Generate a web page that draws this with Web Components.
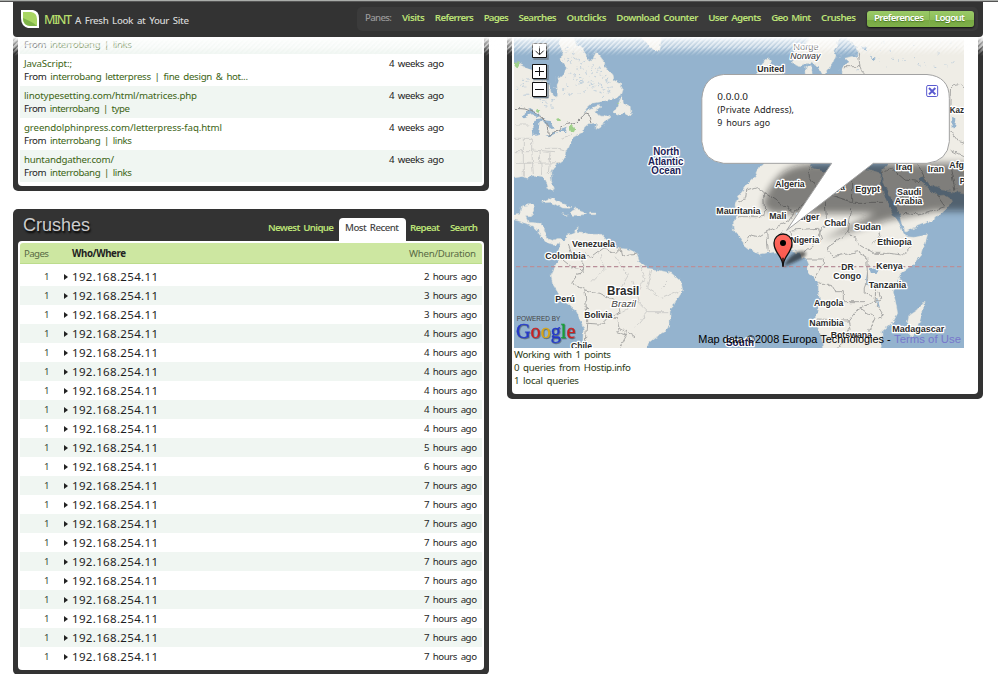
<!DOCTYPE html>
<html lang="en">
<head>
<meta charset="utf-8">
<title>Mint</title>
<style>
html,body{margin:0;height:674px;overflow:hidden;background:#fff}
body{font:9.7px/13px "Noto Sans","Open Sans",sans-serif;color:#262626;word-spacing:1.6px}
</style>
</head>
<body>
<mint-app></mint-app>
<script>
const mount = (el, html) => { el.attachShadow({mode:'open'}).innerHTML = html; };

/* Page shell: header bar on top, two columns of panes below */
customElements.define('mint-app', class extends HTMLElement {
  connectedCallback(){
    const refs = [
      ['','','interrobang | links',108,1],
      ['JavaScript:;',48,'interrobang letterpress | fine design &amp; hot...',224],
      ['linotypesetting.com/html/matrices.php',173,'interrobang | type',106],
      ['greendolphinpress.com/letterpress-faq.html',198,'interrobang | links',108],
      ['huntandgather.com/',90,'interrobang | links',108]];
    const hours = [2,3,3,4,4,4,4,4,4,5,6,7,7,7,7,7,7,7,7,7,7];
    mount(this, `<style>
      :host{display:block;width:998px;height:674px;overflow:hidden;position:relative}
      .top{height:1px;background:#aaadaa;border-bottom:1px solid #555}
      .cols{display:grid;grid-template-columns:476px 476px;gap:18px;padding-left:13px;align-items:start}
      .left{display:grid;gap:18px}
      .clip{height:145px;overflow:hidden;display:flex;flex-direction:column}
      .clip>:first-child{margin-top:-15px}
      .head{height:20px;display:flex;align-items:center;background:#cde7a1;border-bottom:1px solid #bcdc8c;border-radius:3px 3px 0 0;margin-bottom:3px;color:#5a6b45;padding:0 6px 0 4px}
      .head .who{margin-left:23px;color:#222;font-weight:bold}
      .head .when{margin-left:auto}
      .notes{height:42px;color:#2b3a12}
      .notes fit-text{display:block}
      .veil{position:absolute;left:13px;top:37px;width:970px;height:19px;
        background:linear-gradient(#fff,rgba(255,255,255,.6) 25%,rgba(255,255,255,.3) 60%,transparent),repeating-linear-gradient(135deg,rgba(255,255,255,.5) 0 1.2px,transparent 1.8px 3px,rgba(255,255,255,.5) 3.540px);
        -webkit-mask:linear-gradient(#000 55%,transparent);mask:linear-gradient(#000 55%,transparent)}
    </style>
    <div class="top"></div>
    <mint-header></mint-header>
    <div class="cols">
      <div class="left">
        <mint-pane cut><div class="clip">${refs.map((r,i)=>`<ref-row ${i%2?'':'alt'} title1="${r[0]}" w1="${r[1]}" from="${r[2]}" w2="${r[3]}"></ref-row>`).join('')}</div></mint-pane>
        <mint-pane>
          <fit-text slot="title" w="67">Crushes</fit-text>
          <mint-tab slot="tabs" w="66">Newest Unique</mint-tab><mint-tab slot="tabs" active w="54">Most Recent</mint-tab><mint-tab slot="tabs" w="30">Repeat</mint-tab><mint-tab slot="tabs" w="28">Search</mint-tab>
          <div class="head"><fit-text w="25">Pages</fit-text><fit-text class="who" w="54">Who/Where</fit-text><fit-text class="when" w="67">When/Duration</fit-text></div>
          ${hours.map((h,i)=>`<crush-row ${i%2?'alt':''} hours="${h}"></crush-row>`).join('')}
        </mint-pane>
      </div>
      <mint-pane cut>
        <geo-map></geo-map>
        <div class="notes"><fit-text w="97">Working with 1 points</fit-text><fit-text w="117">0 queries from Hostip.info</fit-text><fit-text w="65">1 local queries</fit-text></div>
      </mint-pane>
    </div>
    <div class="veil"></div>`);
  }
});

/* Dark top bar with logo, pane links and the two account buttons */
customElements.define('mint-header', class extends HTMLElement {
  connectedCallback(){
    const links = [['Visits',23],['Referrers',39],['Pages',25],['Searches',38],['Outclicks',40],['Download Counter',82],['User Agents',53],['Geo Mint',40],['Crushes',35]];
    mount(this, `<style>
      :host{display:flex;box-sizing:border-box;width:970px;height:35px;margin-left:13px;padding:5px 5px 4px 7px;background:#333;border-radius:0 0 4px 4px;align-items:flex-start}
      svg{margin-top:2px}
      .m{font-size:12.500px;font-weight:500;color:#b5dc6b;margin:6px 3px 0 4px}
      .t{color:#d6d6d6;font-weight:500;margin-top:7px}
      nav{margin-left:auto;box-sizing:border-box;width:621px;height:24px;border-radius:5px;background:#3b3b3b;display:flex;gap:9.900px;padding:4px 4px 0 8px;color:#bbe276;font-weight:600}
      .p{color:#999;font-weight:500}
      .btn{box-sizing:border-box;width:107px;height:16px;margin:0 0 0 1px;border-radius:3px;display:flex;color:#fff;background:linear-gradient(#9aca67 0,#8cbd58 55%,#78a943 56%,#7fb04a);box-shadow:0 1px 2px #111;padding:0 0 0 7px;text-shadow:0 1px 1px #4c7a25}
      .l{border-left:1px solid #7fae4d;margin-left:5px;padding-left:5px;height:15px}
    </style>
    <svg width="20" height="20" viewBox="0 0 20 20"><path d="M1 1H13Q19 2 19 9V19H8Q1 17 1 9Z" fill="#fff"/><path d="M3 3H11Q17 4 17 10V17H10Q3 16 3 10Z" fill="#a9d663"/><path d="M3 9Q8 11 10.500 12.500 14 14 17 17H10Q3 16 3 9Z" fill="#7fb448"/></svg>
    <fit-text class="m" w="28">MINT</fit-text><fit-text class="t" w="114">A Fresh Look at Your Site</fit-text>
    <nav><fit-text class="p" w="27">Panes:</fit-text>${links.map(l=>`<fit-text w="${l[1]}">${l[0]}</fit-text>`).join('')}
    <span class="btn"><fit-text w="50">Preferences</fit-text><span class="l"><fit-text w="30">Logout</fit-text></span></span></nav>`);
  }
});

/* Dark rounded frame round a white body; "cut" hides the title bar */
customElements.define('mint-pane', class extends HTMLElement {
  connectedCallback(){
    const cut = this.hasAttribute('cut');
    mount(this, `<style>
      :host{display:block;box-sizing:border-box;width:476px;background:#333;border-radius:${cut?'0 0':'5px 5px'} 5px 5px;padding:0 5px 5px}
      .bar{height:32px;display:${cut?'none':'flex'};padding:0 1px 0 5px;justify-content:space-between}
      .title{font:18px/20px "Liberation Sans",sans-serif;color:#ccc;text-shadow:1px 2px 2px #000;padding-top:6px}
      .tabs{display:flex;padding-top:9px}
      .body{background:#fff;border-radius:${cut?'0 0':'4px 4px'} 4px 4px;padding:${cut?0:2}px 2px 4px}
    </style><div class="bar"><div class="title"><slot name="title"></slot></div><div class="tabs"><slot name="tabs"></slot></div></div><div class="body"><slot></slot></div>`);
  }
});

customElements.define('mint-tab', class extends HTMLElement {
  connectedCallback(){
    mount(this, `<style>
      :host{display:block;box-sizing:border-box;height:23px;padding:3px 5px 0;color:#bbe276;font-weight:600}
      :host([active]){background:#fff;color:#444;font-weight:500;border-radius:4px 4px 0 0;padding:3px 7px 0 6px;margin-right:-1px}
    </style><fit-text w="${this.getAttribute('w')}">${this.textContent}</fit-text>`);
  }
});

customElements.define('ref-row', class extends HTMLElement {
  connectedCallback(){
    const a = n => this.getAttribute(n);
    mount(this, `<style>
      :host{display:flex;flex:none;box-sizing:border-box;height:32px;padding:3px 38px 0 4px;justify-content:space-between;color:#3c6414}
      :host([alt]){background:#f0f6f2}
      fit-text{display:block} b{color:#222;font-weight:400}
      .ago{color:#222}
    </style><div>${a('title1')?`<fit-text w="${a('w1')}">${a('title1')}</fit-text>`:'<div style="height:13px"></div>'}<fit-text w="${a('w2')}"><b>From</b> ${a('from').replace('&','&amp;')}</fit-text></div>
    ${a('title1')?'<fit-text class="ago" w="55">4 weeks ago</fit-text>':''}`);
  }
});

customElements.define('crush-row', class extends HTMLElement {
  connectedCallback(){
    mount(this, `<style>
      :host{display:flex;align-items:center;height:19px;padding:0 5px 0 24px}
      :host([alt]){background:#f0f6f2}
      .n{color:#3a4a3a} i{border-left:4px solid #222;border-top:3px solid transparent;border-bottom:3px solid transparent;margin:0 5px 0 15px}
      .ip{font-size:11.500px;color:#1e1e1e;margin-left:-1px} .h{margin-left:auto}
    </style><fit-text class="n" w="5">1</fit-text><i></i><fit-text class="ip" w="86">192.168.254.11</fit-text><fit-text class="h" w="53">${this.getAttribute('hours')} hours ago</fit-text>`);
  }
});

/* World map drawn in units of a third of a pixel */
customElements.define('geo-map', class extends HTMLElement {
  connectedCallback(){
    const labels = [
      ['Venezuela',201,330,636],['Colombia',121,242,672],['Perú',151,210,801],['Bolivia',238,322,849],['Chile',198,261,942],
      ['United',757,838,111],['Kaz',1334,1377,233],['Afg',1333,1377,399],['Iraq',1172,1222,406],['Iran',1268,1317,411],['P',1364,1380,446],
      ['Algeria',811,899,456],['Libya',955,1020,466],['Egypt',1051,1125,471],['Saudi',1176,1249,480],['Arabia',1169,1252,507],
      ['Mauritania',634,766,537],['Mali',793,844,552],['Niger',876,943,556],['Chad',958,1024,573],['Sudan',1047,1128,585],
      ['Nigeria',856,943,624],['Ethiopia',1117,1220,630],['DR',1009,1046,704],['Congo',985,1068,732],['Kenya',1114,1193,702],
      ['Tanzania',1091,1204,759],['Angola',927,1015,813],['Namibia',913,1016,873],['Botswana',977,1101,908],['Madagascar',1162,1318,891]];
    const t = (s,x1,x2,y,extra='') => `<text x="${x1}" y="${y}" textLength="${x2-x1}" lengthAdjust="spacingAndGlyphs" ${extra}>${s}</text>`;
    let specks = '', seed = 7;
    const rnd = () => (seed = (seed*16807)%2147483647)/2147483647;
    for(let i=0;i<150;i++){ const x=175+rnd()*150, y=35+rnd()*155; if(x-175 < (y+40)*.8) specks += `M${x|0} ${y|0}l${2+rnd()*5|0} ${rnd()*6-3|0}`; }
    for(let i=0;i<55;i++) specks += `M${30+rnd()*120|0} ${130+rnd()*90|0}l${2+rnd()*6|0} ${rnd()*6-3|0}`;
    for(let i=0;i<45;i++) specks += `M${990+rnd()*370|0} ${20+rnd()*90|0}l${2+rnd()*6|0} ${rnd()*6-3|0}`;
    mount(this, `<style>
      :host{display:block;width:450px;height:311px;word-spacing:0}
      svg{display:block}
      .lab{font:bold 28px "Liberation Sans",sans-serif;fill:#2b2b2b;stroke:#fff;stroke-width:8px;stroke-linejoin:round;paint-order:stroke}
      .u{font:29px "Noto Sans",sans-serif;fill:#222;word-spacing:5px}
      .sea{font-size:31px;fill:#1c2357}
    </style>
    <svg width="450" height="311" viewBox="27 6 1350 933">
      <defs>
        <filter id="rough" x="0" y="0" width="1" height="1"><feTurbulence type="fractalNoise" baseFrequency=".045" numOctaves="3" seed="4"/><feDisplacementMap in="SourceGraphic" scale="17" xChannelSelector="R" yChannelSelector="G"/></filter>
        <filter id="soft" x="-20%" y="-30%" width="140%" height="160%"><feGaussianBlur stdDeviation="11"/></filter>
        <filter id="soft2" x="-30%" y="-30%" width="160%" height="160%"><feGaussianBlur stdDeviation="4"/></filter>
        <linearGradient id="pin" x2="0" y2="1"><stop stop-color="#ff6a5f"/><stop offset="1" stop-color="#f8544a"/></linearGradient>
      </defs>
      <rect x="0" y="0" width="1400" height="950" fill="#94b3ce"/>
      <g filter="url(#rough)">
      <rect width="1400" height="950" fill="none"/>
      <g fill="#efede6" stroke="#d9dcd8" stroke-width="1.500">
        <path d="M10 72L45 88 60 95 80 105 100 115 125 130 133 150 138 172 148 186 158 182 156 150 162 130 178 115 184 95 168 72 172 50 165 30 170 0H207L215 25 235 40 240 62 260 78 274 50 290 70 300 95 320 115 325 135 345 145 355 162 350 178 330 190 290 200 262 205 245 220 232 240 252 225 280 212 287 218 272 228 285 242 300 246 320 240 318 252 290 270 270 283 272 264 250 266 235 280 232 295 205 310 195 325 185 350 182 370 160 385 145 400 137 412 140 440 148 460 143 472 130 460 122 435 115 425 95 422 70 430 50 425 10 432Z"/>
        <path d="M330 228L345 195 352 182 355 205 375 215 380 242 365 240 355 232 335 238ZM408 0L430 30 455 52 465 45 470 0Z"/>
        <path d="M110 500L130 491 160 500 185 510 200 520 170 519 140 502 115 503ZM195 531L210 522 235 528 245 538 225 541 205 541ZM257 534H272V539H257ZM172 536L190 539 180 542Z"/>
        <path d="M10 540L45 535 50 512 85 508 88 520 76 545 62 545 70 562 108 565 118 575 118 590 130 610 150 618 162 610 175 618 185 600 200 598 205 588 220 575 215 590 240 592 255 598 290 598 300 610 315 625 335 640 370 642 395 655 405 680 430 700 460 705 500 715 528 740 533 765 520 785 505 810 495 830 495 870 475 895 450 908 430 925 420 960H232L235 880 215 830 185 805 160 775 145 750 138 720 150 695 160 670 165 640 160 625 145 628 128 625 110 605 100 590 85 575 55 562 10 550Z"/>
        <path d="M765 395L750 425 735 440 715 465 700 485 690 510 695 540 685 565 690 590 705 610 720 630 745 650 770 660 800 652 830 650 860 645 880 652 890 668 905 672 912 690 905 705 925 730 940 750 940 775 945 800 935 830 930 850 940 880 950 910 955 960H1120L1132 920 1130 890 1165 860 1178 835 1172 800 1165 775 1172 745 1190 715 1225 690 1250 660 1268 598 1230 607 1205 605 1195 590 1180 560 1165 540 1150 510 1135 475 1125 445 1128 418 1110 412 1080 405 1060 414 1000 400 960 410 925 400 910 370H800Z"/>
        <path d="M1132 440L1148 470 1168 505 1188 545 1200 588 1240 572 1290 552 1325 522 1342 495 1320 480 1295 482 1270 460 1243 430 1255 424 1275 450 1310 465 1345 468 1400 478V0H1020L1060 40 1055 62 1018 70 1030 80 1012 95 1010 150 1140 300 1150 385 1132 405Z"/>
        <path d="M950 125L940 95 920 82 885 95 866 85 862 60 880 40 925 0H1010L985 50 990 62 975 100 962 118ZM902 98L918 90 922 120H905ZM750 125L775 95 768 88 790 68 800 78 790 92 838 118V125Z"/>
        <path d="M1257 798L1254 830 1240 870 1225 907 1211 900 1205 870 1212 840 1235 825Z"/>
      </g>
      <g fill="#94b3ce">
        <path d="M50 240L75 222 108 240 98 247 78 238 55 247ZM85 300L82 270 96 252 118 250 103 265 98 298ZM112 255L140 258 150 280 140 282 125 272ZM118 303L150 290 160 292 135 303ZM158 288L185 278 180 288Z"/>
        <path d="M1092 702L1118 700 1116 716 1098 718ZM1083 715L1090 750 1084 742ZM1112 780L1122 815 1115 808ZM1338 245L1354 250 1350 280 1340 275ZM1000 52L1050 40 1052 52 1010 62ZM1070 35L1085 30 1082 50ZM1098 62L1112 68 1105 75Z"/>
      </g>
      <g fill="#9fd08a"><ellipse cx="201" cy="281" rx="9" ry="11"/><ellipse cx="160" cy="254" rx="6" ry="4"/><ellipse cx="35" cy="88" rx="6" ry="9"/><ellipse cx="100" cy="226" rx="6" ry="4"/><circle cx="340" cy="206" r="3"/></g>
      <path d="${specks}" stroke="#b4c8d8" stroke-width="2.500" fill="none"/>
      <g fill="none" stroke="#a9a9a7" stroke-width="3">
        <path d="M27 220L60 222 95 235 125 262 130 302 185 268 215 262 240 236 252 240 258 262" stroke="#8d8d8d"/>
        <path d="M165 668L205 700 232 705 235 660 200 655 190 630M240 660L262 665 295 640 265 620M295 640L330 655 345 640 350 660 395 655M232 705L200 745 240 765 285 775 335 800 345 830 300 855 300 868 245 865 245 835 240 765M300 850L340 850 345 880 335 890 365 900 345 938M245 865L240 938M345 880L390 905"/>
        <path d="M755 455L725 465 722 490 700 500M755 455L775 470 780 545 700 545M775 470L865 530M915 395L912 420 940 470 868 530 850 560 785 590 760 605 735 600M940 470L960 492 965 560 940 600M960 475L1040 500V440L1038 400M1045 502H1135M1040 520L1030 590 965 640M1030 590L1060 625 1110 655 1150 655M965 640L985 665 1060 650 1085 665 1088 730 1080 770 1100 785M1150 655L1195 660 1225 630M1130 590L1105 625M855 585L860 640M860 585L940 580 950 610 900 650M830 590L828 650M785 590L790 650M735 600L720 625M905 672L955 672 955 690 930 730M940 745L975 745 990 770H1015V800L1080 800M930 855L1030 858 1060 820 1085 810M1030 858L1035 880 1000 938M1085 810L1130 790 1125 770M1112 765L1110 800 1135 840 1120 850M1060 815L1110 850 1090 890"/>
        <path d="M1010 95H1065L1060 50M1065 95L1075 118M1337 230L1340 150 1365 145 1377 160M1335 285L1360 320 1377 325M1130 410L1160 400 1200 435 1245 440M1235 380L1265 440M1295 480L1320 515 1240 540 1195 535M1337 345L1377 365M1337 400L1350 465"/>
      </g>
      <g fill="none" stroke="#cfcfcc" stroke-width="3"><path d="M27 270H70M27 310H80V345L150 350M55 310V425M80 345L85 420M27 350H80M27 385H80M105 350L110 420M120 340L160 340 185 345M85 385L165 383M135 350L130 420M165 310L200 300M285 660L300 700 260 740M330 665L370 720 330 790M405 690L420 730 395 780M440 705L425 760 470 790 520 770M495 735L470 760M350 830L400 800 430 830 490 830M400 800L380 740M430 830L390 880"/></g>
      </g>
      <path d="M33 695H1377" stroke="#b98f99" stroke-width="4" stroke-dasharray="13 8"/>
      <path filter="url(#soft)" d="M772 512Q785 460 830 415Q870 385 940 385H1420V528H1290L1150 555 950 615 1110 535H800Z" fill="#111" opacity=".49"/>
      <g class="lab">${labels.map(l=>t(...l)).join('')}
        ${t('Norge',865,941,45,'style="font-weight:400;fill:#444"')}${t('Norway',856,946,71,'style="font-weight:400;font-style:italic"')}
        ${t('Brasil',306,403,780,'style="font-size:36px"')}${t('Brazil',319,393,815,'style="font-weight:400;font-style:italic;fill:#444"')}
        ${t('North',445,523,360,'class="sea"')}${t('Atlantic',429,535,390,'class="sea"')}${t('Ocean',439,528,417,'class="sea"')}${t('South',663,747,932,'class="sea"')}
      </g>
      <path d="M835 695Q850 660 880 650Q905 645 903 658Q898 672 835 695Z" fill="#111" opacity=".6" filter="url(#soft2)"/>
      <path d="M656 118.500H1266Q1333 124 1333 190V320Q1328 378 1266 385H1105L845 586 980 385H656Q596 378 590.500 320V190Q596 124 656 118.500Z" fill="#fff" stroke="#a2a2a2" stroke-width="3"/>
      <g class="u">${t('0.0.0.0',637,729,195)}${t('(Private Address),',637,867,234)}${t('9 hours ago',637,795,273)}</g>
      <g fill="none" stroke="#5b5bd0"><rect x="1265" y="151.500" width="33" height="33" rx="4" stroke-width="3" fill="#fff"/><path d="M1272 159L1291 178M1291 159L1272 178" stroke-width="6"/></g>
      <path d="M834 693C833 662 807 655 807 624A27 27 0 0 1 861 624C861 655 835 662 834 693Z" fill="url(#pin)" stroke="#111" stroke-width="4"/><circle cx="834" cy="624" r="9"/>
      <path d="M834 668V696" stroke="#111" stroke-width="4"/>
      <g fill="#fff" stroke="#111" stroke-width="3">
        <path d="M85 72H129V28M85 134H129V90M85 188H129V144" fill="none" stroke="#6f7f8c" stroke-width="4"/>
        <path d="M82.500 25.500H124.500V67.500H82.500ZM82.500 88.500H124.500V130.500H82.500ZM82.500 142.500H124.500V184.500H82.500Z"/>
        <path d="M103.500 33V58M91 47L103.500 59.500 116 47M90 109.500H117M103.500 96V123M90 163.500H117" fill="none"/>
      </g>
      ${t('POWERED BY',35,166,857,'font-family="Liberation Sans" font-size="21" fill="#444"')}
      <g font-family="Liberation Serif" font-size="62" stroke-width="1" style="filter:drop-shadow(2px 3px 1px #0006)">
        <text x="33" y="908" textLength="178" lengthAdjust="spacingAndGlyphs"><tspan fill="#2438c8" stroke="#2438c8">G</tspan><tspan fill="#c92222" stroke="#c92222">o</tspan><tspan fill="#d9a514" stroke="#d9a514">o</tspan><tspan fill="#2438c8" stroke="#2438c8">g</tspan><tspan fill="#18a038" stroke="#18a038">l</tspan><tspan fill="#c92222" stroke="#c92222">e</tspan></text>
      </g>
      <g font-family="Liberation Sans" font-size="33">${t('Map data ©2008 Europa Technologies -',580,1157,923)}${t('Terms of Use',1167,1368,923,'fill="#7777cc"')}</g>
    </svg>`);
  }
});

/* Text set to an exact width: the difference goes into letter-spacing */
customElements.define('fit-text', class extends HTMLElement {
  connectedCallback(){
    const w = +this.getAttribute('w');
    mount(this, `<style>:host{display:inline-block;white-space:nowrap;width:${w}px;flex:none}</style><span><slot></slot></span>`);
    const s = this.shadowRoot.querySelector('span');
    const n = this.textContent.length;
    const nat = s.getBoundingClientRect().width;
    if (n > 1 && nat) s.style.letterSpacing = ((w - nat)/(n - 1)).toFixed(3) + 'px';
  }
});
</script>
</body>
</html>
